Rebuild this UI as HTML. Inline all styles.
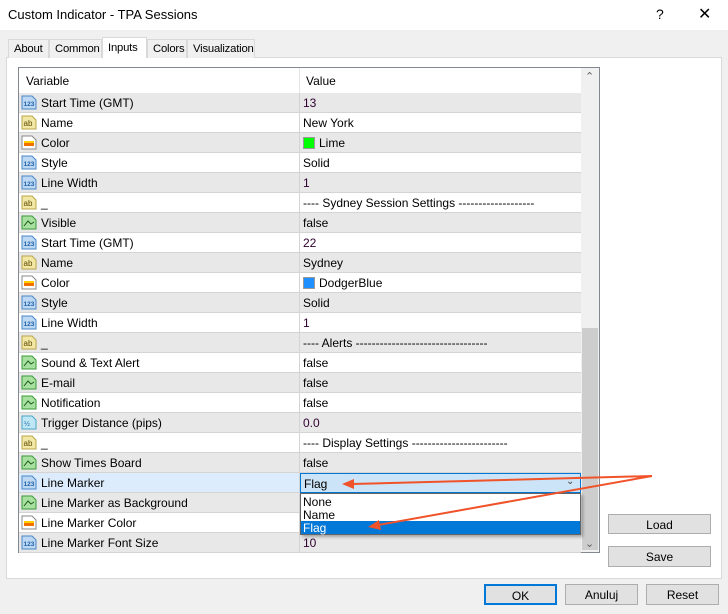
<!DOCTYPE html>
<html><head><meta charset="utf-8"><style>
*{margin:0;padding:0;box-sizing:border-box}
body{width:728px;height:614px;background:#f0f0f0;font-family:"Liberation Sans",sans-serif;font-size:12px;color:#000;position:relative;overflow:hidden}
.a{position:absolute}
.title{left:0;top:0;width:728px;height:30px;background:#fff}
.tab{top:39px;height:19px;border:1px solid #d9d9d9;border-bottom:none;background:#f0f0f0;padding:3px 0 0 5px;font-size:11.3px;letter-spacing:-0.2px;white-space:nowrap}
.row{left:19px;width:562px;height:20px;border-bottom:1px solid #d4d4d4}
.row span{position:absolute;top:3px}
.ic{position:absolute;left:2px;top:2px;width:16px;height:15px}
.btn{background:#e1e1e1;border:1px solid #adadad;text-align:center;padding-top:3px;font-size:12px}
</style></head><body>
<div class="a title"></div>
<div class="a" style="left:8px;top:7px;font-size:13px">Custom Indicator - TPA Sessions</div>
<div class="a" style="left:656px;top:6px;font-size:14px">?</div>
<div class="a" style="left:698px;top:4px;font-size:16px;font-weight:300">✕</div>
<div class="a" style="left:6px;top:57px;width:716px;height:522px;background:#fff;border:1px solid #d9d9d9"></div>
<div class="a tab" style="left:8px;width:41px">About</div>
<div class="a tab" style="left:49px;width:53px">Common</div>
<div class="a tab" style="left:102px;top:37px;height:21px;width:45px;background:#fff;padding-top:4px">Inputs</div>
<div class="a tab" style="left:147px;width:40px">Colors</div>
<div class="a tab" style="left:187px;width:68px">Visualization</div>
<div class="a" style="left:18px;top:67px;width:582px;height:486px;border:1px solid #828790;background:#fff"></div>
<div class="a" style="left:19px;top:68px;width:562px;height:25px;background:#fff"></div>
<div class="a" style="left:26px;top:74px">Variable</div>
<div class="a" style="left:299px;top:68px;width:1px;height:25px;background:#e5e5e5"></div>
<div class="a" style="left:306px;top:74px">Value</div>
<div class="a" style="left:581px;top:68px;width:18px;height:484px;background:#f0f0f0"></div>
<div class="a" style="left:582px;top:328px;width:16px;height:222px;background:#cdcdcd"></div>
<div class="a" style="left:585px;top:70px;font-size:11px;color:#606060">⌃</div>
<div class="a" style="left:585px;top:537px;font-size:11px;color:#606060">⌄</div>
<div id="rows"></div>
<script>
var R=[["Start Time (GMT)","n","13"],["Name","ab","New York"],["Color","c","Lime","#00ff00"],["Style","n","Solid"],["Line Width","n","1"],["_","ab","---- Sydney Session Settings -------------------"],["Visible","t","false"],["Start Time (GMT)","n","22"],["Name","ab","Sydney"],["Color","c","DodgerBlue","#1e90ff"],["Style","n","Solid"],["Line Width","n","1"],["_","ab","---- Alerts ---------------------------------"],["Sound & Text Alert","t","false"],["E-mail","t","false"],["Notification","t","false"],["Trigger Distance (pips)","v","0.0"],["_","ab","---- Display Settings ------------------------"],["Show Times Board","t","false"],["Line Marker","n",""],["Line Marker as Background","t",""],["Line Marker Color","c",""],["Line Marker Font Size","n","10"]];
var icons={
n:'<svg class="ic" viewBox="0 0 16 15"><path d="M1 1h10l4 4v9H1z" fill="#bcd8f2" stroke="#4a86c6"/><text x="2.5" y="11" font-size="6.5" font-family="Liberation Sans" fill="#1f5fa8" font-weight="bold">123</text></svg>',
ab:'<svg class="ic" viewBox="0 0 16 15"><path d="M1 1h10l4 4v9H1z" fill="#f3e7a6" stroke="#b9a54a"/><text x="2.5" y="11" font-size="8" font-family="Liberation Sans" fill="#5a4a00">ab</text></svg>',
c:'<svg class="ic" viewBox="0 0 16 15"><path d="M1 1h10l4 4v9H1z" fill="#fff" stroke="#888"/><rect x="3" y="6" width="10" height="5" fill="#f07000"/><rect x="3" y="6" width="10" height="2" fill="#ffd000"/></svg>',
t:'<svg class="ic" viewBox="0 0 16 15"><path d="M1 1h10l4 4v9H1z" fill="#a8e0a0" stroke="#3a9a3a"/><path d="M3 11l4-5 3 3 3-2" stroke="#1a5a1a" fill="none"/></svg>',
v:'<svg class="ic" viewBox="0 0 16 15"><path d="M1 1h10l4 4v9H1z" fill="#bfe6f5" stroke="#4aa6c6"/><text x="3" y="11" font-size="7" font-family="Liberation Sans" fill="#1f6fa8">½</text></svg>'};
var h='';
R.forEach(function(r,i){var y=93+i*20;var bg=i%2?'#fff':'#e8e8e8';
h+='<div class="a row" style="top:'+y+'px;background:'+bg+'">'+(i==19?'<div class="a" style="left:0;top:0;width:280px;height:19px;background:#dcecfc"></div>':'')+icons[r[1]]+'<span style="left:22px">'+r[0].replace('&','&amp;')+'</span><div class="a" style="left:280px;top:0;width:1px;height:20px;background:#d4d4d4"></div>';
if(r[3])h+='<div class="a" style="left:284px;top:4px;width:12px;height:12px;background:'+r[3]+';border:1px solid #999"></div><span style="left:300px">'+r[2]+'</span>';
else h+='<span style="left:284px;color:'+(/^[0-9.]+$/.test(r[2])?'#300030':'#000')+'">'+r[2]+'</span>';
h+='</div>';});
document.getElementById('rows').innerHTML=h;
</script>
<div class="a" style="left:300px;top:473px;width:281px;height:20px;background:#cce4f7;border:1px solid #0078d7"></div>
<div class="a" style="left:304px;top:477px">Flag</div>
<div class="a" style="left:566px;top:476px;font-size:10px;color:#444">&#8964;</div>
<div class="a" style="left:300px;top:493px;width:281px;height:42px;background:#fff;border:1px solid #646464;box-shadow:2px 2px 3px rgba(0,0,0,.3)"></div>
<div class="a" style="left:303px;top:495px">None</div>
<div class="a" style="left:303px;top:508px">Name</div>
<div class="a" style="left:301px;top:521px;width:279px;height:13px;background:#0078d7"></div>
<div class="a" style="left:303px;top:521px;color:#fff">Flag</div>
<div class="a btn" style="left:608px;top:514px;width:103px;height:20px">Load</div>
<div class="a btn" style="left:608px;top:546px;width:103px;height:21px">Save</div>
<div class="a btn" style="left:484px;top:584px;width:73px;height:21px;border:2px solid #0078d7">OK</div>
<div class="a btn" style="left:565px;top:584px;width:73px;height:21px">Anuluj</div>
<div class="a btn" style="left:646px;top:584px;width:73px;height:21px">Reset</div>
<svg class="a" style="left:0;top:0" width="728" height="614"><g stroke="#f0522a" stroke-width="2" fill="#f0522a"><line x1="652" y1="476" x2="352" y2="484"/><line x1="652" y1="476" x2="378" y2="525"/><path d="M342 484l12-5v10z" stroke="none"/><path d="M368 527l11-7 2 10z" stroke="none"/></g></svg>
</body></html>
